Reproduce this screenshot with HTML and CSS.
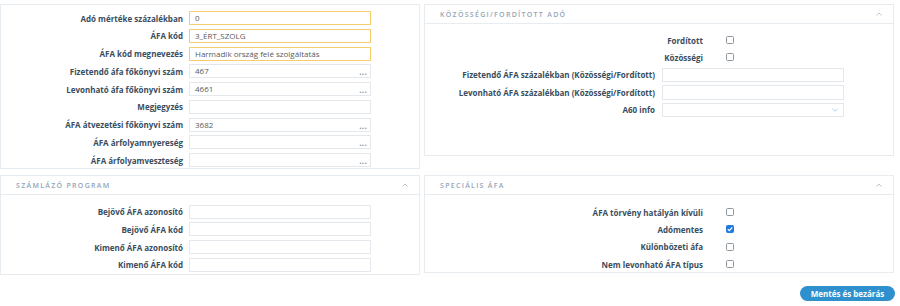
FILE: index.html
```html
<!DOCTYPE html>
<html lang="hu">
<head>
<meta charset="utf-8">
<link rel="stylesheet" href="styles.css">
</head>
<body>
<div class="page">
  <div class="grid">
    <section class="panel panel-main">
      <div class="frow"><label>Adó mértéke százalékban</label><div class="inp req">0</div></div>
      <div class="frow"><label>ÁFA kód</label><div class="inp req">3_ÉRT_SZOLG</div></div>
      <div class="frow"><label>ÁFA kód megnevezés</label><div class="inp req">Harmadik ország felé szolgáltatás</div></div>
      <div class="frow"><label>Fizetendő áfa főkönyvi szám</label><div class="inp">467<span class="dots">...</span></div></div>
      <div class="frow"><label>Levonható áfa főkönyvi szám</label><div class="inp">4661<span class="dots">...</span></div></div>
      <div class="frow"><label>Megjegyzés</label><div class="inp"></div></div>
      <div class="frow"><label>ÁFA átvezetési főkönyvi szám</label><div class="inp">3682<span class="dots">...</span></div></div>
      <div class="frow"><label>ÁFA árfolyamnyereség</label><div class="inp"><span class="dots">...</span></div></div>
      <div class="frow"><label>ÁFA árfolyamveszteség</label><div class="inp"><span class="dots">...</span></div></div>
    </section>

    <section class="panel panel-koz">
      <header class="phead"><span>Közösségi/fordított adó</span><svg class="chev" viewBox="0 0 6 4"><path d="M0.5 3.5 L3 1 L5.5 3.5" fill="none" stroke="#a9b4c0" stroke-width="0.8"/></svg></header>
      <div class="pbody koz-body">
        <div class="crow"><label>Fordított</label><span class="cb"></span></div>
        <div class="crow"><label>Közösségi</label><span class="cb"></span></div>
        <div class="rrow"><label>Fizetendő ÁFA százalékban (Közösségi/Fordított)</label><div class="inp"></div></div>
        <div class="rrow"><label>Levonható ÁFA százalékban (Közösségi/Fordított)</label><div class="inp"></div></div>
        <div class="rrow"><label>A60 info</label><div class="inp sel"><svg class="down" viewBox="0 0 6 4"><path d="M0.5 0.8 L3 3.2 L5.5 0.8" fill="none" stroke="#8fc3e6" stroke-width="0.8"/></svg></div></div>
      </div>
    </section>

    <section class="panel panel-szaml">
      <header class="phead"><span>Számlázó program</span><svg class="chev" viewBox="0 0 6 4"><path d="M0.5 3.5 L3 1 L5.5 3.5" fill="none" stroke="#a9b4c0" stroke-width="0.8"/></svg></header>
      <div class="pbody szaml-body">
        <div class="frow"><label>Bejövő ÁFA azonosító</label><div class="inp"></div></div>
        <div class="frow"><label>Bejövő ÁFA kód</label><div class="inp"></div></div>
        <div class="frow"><label>Kimenő ÁFA azonosító</label><div class="inp"></div></div>
        <div class="frow"><label>Kimenő ÁFA kód</label><div class="inp"></div></div>
      </div>
    </section>

    <section class="panel panel-spec">
      <header class="phead"><span>Speciális ÁFA</span><svg class="chev" viewBox="0 0 6 4"><path d="M0.5 3.5 L3 1 L5.5 3.5" fill="none" stroke="#a9b4c0" stroke-width="0.8"/></svg></header>
      <div class="pbody spec-body">
        <div class="crow"><label>ÁFA törvény hatályán kívüli</label><span class="cb"></span></div>
        <div class="crow"><label>Adómentes</label><span class="cb on"><svg viewBox="0 0 8 8"><path d="M1.8 4.2 L3.4 5.7 L6.3 2.3" fill="none" stroke="#fff" stroke-width="1.2"/></svg></span></div>
        <div class="crow"><label>Különbözeti áfa</label><span class="cb"></span></div>
        <div class="crow"><label>Nem levonható ÁFA típus</label><span class="cb"></span></div>
      </div>
    </section>
  </div>
  <div class="actions"><button class="btn">Mentés és bezárás</button></div>
</div>
</body>
</html>
```

FILE: styles.css
```css
* { box-sizing: border-box; }
html, body { margin: 0; padding: 0; background: #fff; }
body {
  font-family: "Open Sans", "Noto Sans", sans-serif;
  font-size: 8px;
  color: #3a4d60;
}
.page { padding: 4px 6px 0 0; width: 900px; }
.grid {
  display: grid;
  grid-template-columns: 420px 470px;
  column-gap: 4px;
  row-gap: 6px;
  align-items: start;
}
.panel { border: 1px solid #e7ecf1; background: #fff; }
.panel-main { height: 165px; padding: 6px 0 0 0; }
.panel-koz { height: 152px; }
.panel-szaml { height: 100px; }
.panel-spec { height: 98px; }

.phead {
  height: 19px;
  border-bottom: 1px solid #e7ecf1;
  display: flex;
  align-items: center;
  justify-content: space-between;
  padding: 0 11px 0 15px;
  text-transform: uppercase;
  letter-spacing: 1.3px;
  font-size: 7px;
  font-weight: 600;
  color: #94a6b8;
}
.chev { width: 6px; height: 4px; }

.frow {
  display: flex;
  align-items: center;
  height: 14px;
  margin-bottom: 3.75px;
}
.frow label {
  width: 182px;
  text-align: right;
  font-weight: 700;
  white-space: nowrap;
}
.frow .inp { margin-left: 6px; }

.inp {
  position: relative;
  width: 182px;
  height: 14px;
  border: 1px solid #e4e8ec;
  background: #fff;
  color: #5a5a5a;
  font-size: 8px;
  line-height: 12px;
  padding-left: 5px;
  white-space: nowrap;
}
.inp.req { border-color: #f6cd6e; }
.dots {
  position: absolute;
  right: 3px;
  bottom: 1px;
  line-height: 8px;
  font-size: 8px;
  letter-spacing: 0.3px;
  color: #7c94ad;
  font-weight: 700;
}
.sel .down {
  position: absolute;
  right: 5px;
  top: 4.5px;
  width: 6px;
  height: 4px;
}

.szaml-body { padding-top: 9.5px; }
.koz-body { padding-top: 7.5px; }
.spec-body { padding-top: 8.5px; }

.crow {
  display: flex;
  align-items: center;
  height: 17.3px;
}
.koz-body .crow:nth-child(2) { margin-bottom: 1.5px; }
.crow label {
  width: 278px;
  text-align: right;
  font-weight: 700;
  white-space: nowrap;
}
.cb {
  margin-left: 23px;
  width: 8px;
  height: 8px;
  border: 1px solid #8e969e;
  border-radius: 1.5px;
  display: inline-block;
}
.cb.on {
  background: #1f7be0;
  border-color: #1f7be0;
  position: relative;
}
.cb.on svg { position: absolute; left: -1px; top: -1px; width: 8px; height: 8px; }

.rrow {
  display: flex;
  align-items: center;
  height: 14.5px;
  margin-bottom: 3px;
}
.rrow label {
  width: 230px;
  text-align: right;
  font-weight: 700;
  white-space: nowrap;
}
.rrow .inp { margin-left: 7px; height: 14.5px; }

.actions {
  display: flex;
  justify-content: flex-end;
  padding-top: 11px;
}
.btn {
  margin-right: -1px;
  width: 95px;
  height: 15px;
  border: none;
  border-radius: 8px;
  background: #2e90cd;
  color: #fff;
  font-family: "Open Sans", "Noto Sans", sans-serif;
  font-size: 8px;
  font-weight: 700;
  padding: 0;
  line-height: 15px;
}
```
